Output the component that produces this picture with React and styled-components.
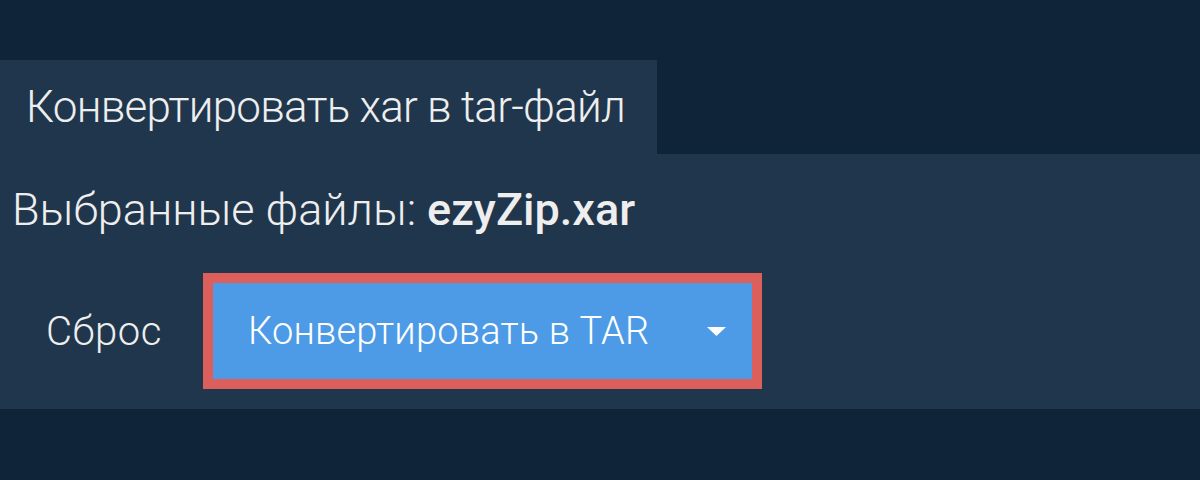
import React from 'react';
import styled, { createGlobalStyle } from 'styled-components';

const GlobalStyle = createGlobalStyle`
  html, body {
    margin: 0;
    padding: 0;
    background: #0f2339;
  }
  body {
    font-family: Roboto, "Noto Sans", sans-serif;
    color: #eeeeee;
  }
`;

const Page = styled.div`
  width: 1200px;
  height: 480px;
  padding-top: 60px;
  box-sizing: border-box;
  overflow: hidden;
`;

const Tab = styled.div`
  width: 657px;
  height: 94px;
  box-sizing: border-box;
  padding-left: 26px;
  background: #20364d;
  display: flex;
  align-items: center;
  font-size: 44px;
  font-weight: 300;
  letter-spacing: -0.75px;
  white-space: nowrap;
`;

const Panel = styled.div`
  background: #20364d;
  height: 255px;
  display: flex;
  flex-direction: column;
`;

const Selected = styled.div`
  padding: 29px 0 0 12px;
  height: 119px;
  box-sizing: border-box;
  font-size: 45px;
  font-weight: 300;
  white-space: nowrap;
  b {
    font-weight: 500;
  }
`;

const Actions = styled.div`
  display: flex;
  align-items: center;
  padding-left: 46px;
  gap: 41px;
`;

const Reset = styled.span`
  font-size: 40px;
  font-weight: 300;
  letter-spacing: 0.6px;
`;

const ConvertButton = styled.button`
  display: flex;
  align-items: center;
  width: 559px;
  height: 116px;
  box-sizing: border-box;
  padding: 0 26px 0 35px;
  background: #4d9be6;
  border: 10px solid #dc5f5c;
  color: #ffffff;
  font-family: inherit;
  font-size: 38px;
  font-weight: 300;
  letter-spacing: 0.2px;
  cursor: pointer;
`;

const Label = styled.span`
  flex: 1;
  text-align: left;
`;

const Caret = styled.svg`
  width: 19px;
  height: 9px;
`;

export default function App() {
  return (
    <Page>
      <GlobalStyle />
      <Tab>Конвертировать xar в tar-файл</Tab>
      <Panel>
        <Selected>
          Выбранные файлы: <b>ezyZip.xar</b>
        </Selected>
        <Actions>
          <Reset>Сброс</Reset>
          <ConvertButton>
            <Label>Конвертировать в TAR</Label>
            <Caret viewBox="0 0 19 9">
              <path d="M0 0 H19 L9.5 9 Z" fill="#ffffff" />
            </Caret>
          </ConvertButton>
        </Actions>
      </Panel>
    </Page>
  );
}
